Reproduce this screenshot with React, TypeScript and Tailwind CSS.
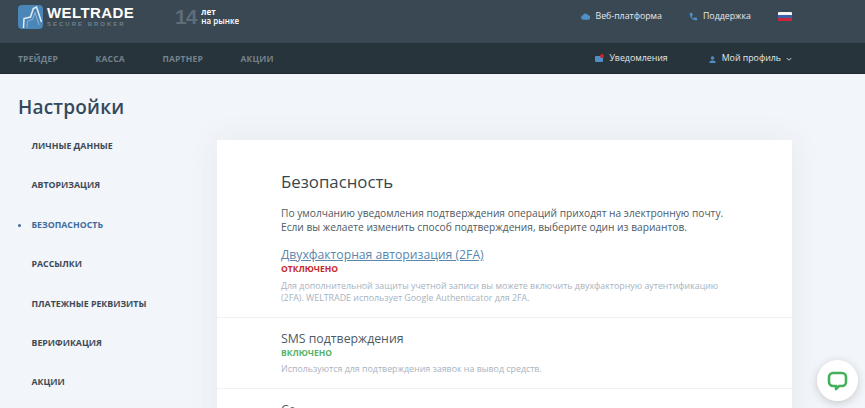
const NAV_ITEMS = ["ТРЕЙДЕР", "КАССА", "ПАРТНЕР", "АКЦИИ"];

const SIDE_ITEMS = [
  "ЛИЧНЫЕ ДАННЫЕ",
  "АВТОРИЗАЦИЯ",
  "БЕЗОПАСНОСТЬ",
  "РАССЫЛКИ",
  "ПЛАТЕЖНЫЕ РЕКВИЗИТЫ",
  "ВЕРИФИКАЦИЯ",
  "АКЦИИ",
];

function Logo() {
  return (
    <svg width="25" height="24" viewBox="0 0 25 24" className="shrink-0">
      <rect width="25" height="24" rx="4" fill="#4b86b8" />
      <path d="M5.5 23L6 13.5L12.5 12L15.3 3.5L18.5 2L23.5 17" fill="none" stroke="#e6edf2" strokeWidth="1.5" />
      <path d="M9 23L9.5 16L14.5 14.5L17 7.5L21 20" fill="none" stroke="#e6edf2" strokeWidth="0.7" opacity="0.6" />
    </svg>
  );
}

function Flag() {
  return (
    <div className="flex flex-col w-[14px] h-[10px] overflow-hidden rounded-[1px]">
      <div className="flex-1 bg-[#f4f4f4]" />
      <div className="flex-1 bg-[#3b5fa8]" />
      <div className="flex-1 bg-[#c8283a]" />
    </div>
  );
}

export default function App() {
  return (
    <div className="w-[865px] h-[408px] overflow-hidden bg-[#f2f5f9] font-['Open_Sans',sans-serif]">
      {/* Top bar */}
      <header className="h-[43px] bg-[#3a4853] flex items-center pl-[18px] pb-[10px]">
        <Logo />
        <div className="ml-[4px] w-[91px] flex flex-col">
          <span className="font-['Liberation_Sans',sans-serif] text-[15px] leading-[15px] font-bold text-white tracking-[0.4px]">
            WELTRADE
          </span>
          <span className="font-['Liberation_Sans',sans-serif] text-[6px] leading-[9px] font-bold text-[#6f7f8b] tracking-[2px] whitespace-nowrap">
            SECURE BROKER
          </span>
        </div>
        <div className="ml-[37px] flex items-center">
          <span className="font-['Liberation_Sans',sans-serif] text-[21px] leading-none font-bold text-[#5e6d79] tracking-[-1px]">
            14
          </span>
          <div className="ml-[5px] flex flex-col text-[8px] leading-[8.5px] text-white">
            <span className="font-bold">лет</span>
            <span className="font-semibold">на рынке</span>
          </div>
        </div>
        <div className="ml-auto flex items-center text-[8.8px] text-[#e4e9ed] pr-[73px]">
          <svg width="9" height="7" viewBox="0 0 24 17" fill="#4f8fc4">
            <path d="M6 17a6 6 0 0 1-1-11.9A7.5 7.5 0 0 1 19 5a6 6 0 0 1-.5 12z" />
          </svg>
          <span className="ml-[5px]">Веб-платформа</span>
          <svg className="ml-[27px]" width="9" height="9" viewBox="0 0 24 24" fill="#4f8fc4">
            <path d="M5 2l4 1 1 6-3 2c1 3 3 5 6 6l2-3 6 1 1 4c0 2-1 3-3 3C10 22 2 14 2 5c0-2 1-3 3-3z" />
          </svg>
          <span className="ml-[5px]">Поддержка</span>
          <div className="ml-[27px]">
            <Flag />
          </div>
        </div>
      </header>

      {/* Main nav */}
      <nav className="h-[31px] bg-[#27343c] border-b border-[#1f2a31] flex items-center pl-[18px] pt-[2px]">
        <div className="flex gap-[37.6px] text-[8.5px] font-bold text-[#75838d] tracking-[0.2px]">
          {NAV_ITEMS.map((item) => (
            <span key={item}>{item}</span>
          ))}
        </div>
        <div className="ml-auto flex items-center text-[8.8px] font-medium text-[#e4e9ed] pr-[73px]">
          <div className="relative w-[8px] h-[6px] rounded-[1px] bg-[#4f8fc4]">
            <div className="absolute -top-[2px] left-[5px] w-[4px] h-[4px] rounded-full bg-[#d0202e]" />
          </div>
          <span className="ml-[6px]">Уведомления</span>
          <svg className="ml-[41px]" width="7" height="7" viewBox="0 0 24 24" fill="#4f8fc4">
            <circle cx="12" cy="7" r="6" />
            <path d="M1 24c0-7 5-9 11-9s11 2 11 9z" />
          </svg>
          <span className="ml-[6px]">Мой профиль</span>
          <svg className="ml-[5px]" width="6" height="6" viewBox="0 0 24 24" fill="none" stroke="#c3ccd3" strokeWidth="4">
            <path d="M3 8l9 9 9-9" />
          </svg>
        </div>
      </nav>

      {/* Content */}
      <div className="flex">
        <aside className="w-[217px] shrink-0 pl-[18px] pt-[21px]">
          <h1 className="text-[19px] leading-[24px] font-semibold text-[#35495c] tracking-[0.2px]">Настройки</h1>
          <ul className="mt-[8px]">
            {SIDE_ITEMS.map((item) => {
              const active = item === "БЕЗОПАСНОСТЬ";
              return (
                <li
                  key={item}
                  className={`relative h-[39.4px] pl-[13.5px] flex items-center text-[8.8px] font-bold ${
                    active ? "text-[#3d6d9f]" : "text-[#3d4a55]"
                  }`}
                >
                  {active && <span className="absolute left-0 w-[3px] h-[3px] rounded-full bg-[#3d6d9f]" />}
                  {item}
                </li>
              );
            })}
          </ul>
        </aside>

        <main className="w-[575px] mt-[66px] h-[400px] bg-white shadow-[0_0_30px_rgba(60,80,110,0.07)] shrink-0">
          <section className="pl-[64px] pr-[60px] pt-[31px] pb-[13px] border-b border-[#f0f1f3]">
            <h2 className="text-[16.8px] leading-[22px] text-[#37474f]">Безопасность</h2>
            <p className="mt-[13px] text-[10.2px] leading-[14px] text-[#4e5a63] whitespace-nowrap">
              По умолчанию уведомления подтверждения операций приходят на электронную почту.
              <br />
              Если вы желаете изменить способ подтверждения, выберите один из вариантов.
            </p>
            <a className="block mt-[13px] text-[12.2px] leading-[16px] text-[#5b87ad] underline">
              Двухфакторная авторизация (2FA)
            </a>
            <div className="text-[8.5px] leading-[12px] font-bold text-[#c62a2a]">ОТКЛЮЧЕНО</div>
            <p className="mt-[5px] text-[8.85px] leading-[12px] text-[#a8b3bf]">
              Для дополнительной защиты учетной записи вы можете включить двухфакторную аутентификацию (2FA). WELTRADE использует Google Authenticator для 2FA.
            </p>
          </section>
          <section className="pl-[64px] pr-[60px] pt-[13px] pb-[12px] border-b border-[#f0f1f3]">
            <h3 className="text-[12.3px] leading-[16px] text-[#4e5a63]">SMS подтверждения</h3>
            <div className="text-[8.5px] leading-[12px] font-bold text-[#58b368]">ВКЛЮЧЕНО</div>
            <p className="mt-[4px] text-[8.85px] leading-[12.5px] text-[#a8b3bf]">
              Используются для подтверждения заявок на вывод средств.
            </p>
          </section>
          <section className="pl-[64px] pt-[13px]">
            <h3 className="text-[12.3px] leading-[16px] text-[#4e5a63]">Се</h3>
          </section>
        </main>
      </div>

      {/* Chat widget */}
      <div className="fixed left-[817px] top-[360px] w-[41px] h-[41px] rounded-full bg-white shadow-[0_2px_10px_rgba(0,0,0,0.18)] flex items-center justify-center">
        <svg width="21" height="20" viewBox="0 0 21 20" fill="none">
          <path
            d="M6 2h9a4 4 0 0 1 4 4v5a4 4 0 0 1-4 4h-3l-3 3v-3H6a4 4 0 0 1-4-4V6a4 4 0 0 1 4-4z"
            stroke="#45b05c"
            strokeWidth="2.6"
            strokeLinejoin="round"
          />
        </svg>
      </div>
    </div>
  );
}
